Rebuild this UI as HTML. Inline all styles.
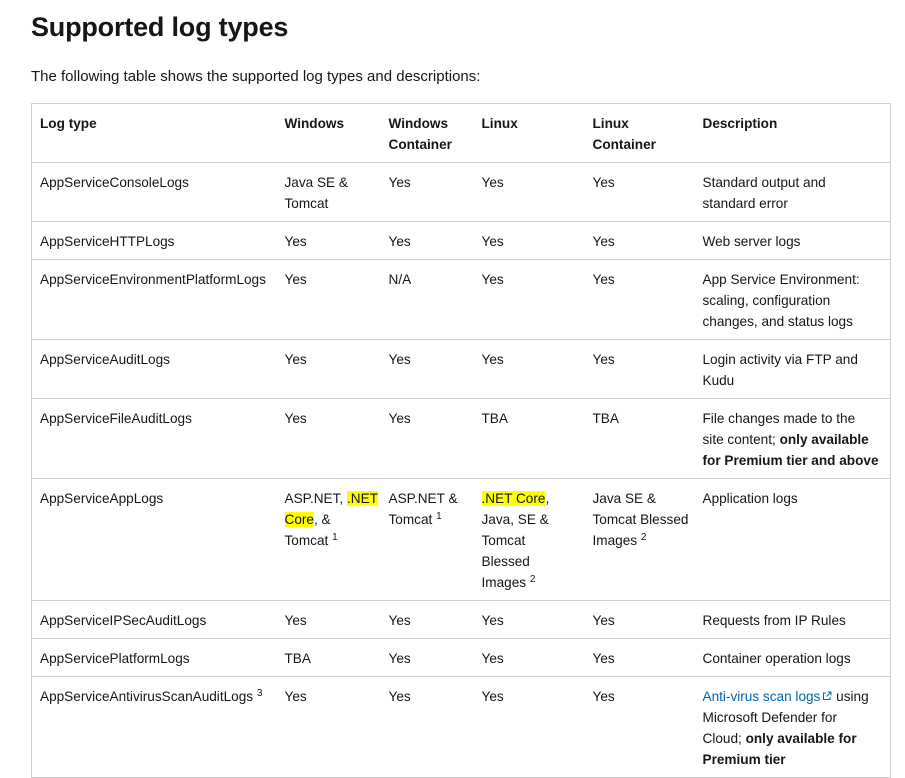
<!DOCTYPE html>
<html><head><meta charset="utf-8"><style>
body{margin:0;background:#fff;color:#161616;font-family:"Liberation Sans",Arial,sans-serif;}
h1{position:absolute;left:31px;top:12px;margin:0;font-size:27px;font-weight:600;letter-spacing:-0.2px;}
p{position:absolute;left:31px;top:66px;margin:0;font-size:15px;line-height:22px;}
table{position:absolute;left:31px;top:103px;border-collapse:collapse;table-layout:fixed;width:859px;font-size:13.6px;}
td,th{border:1px solid #d1d1d1;padding:9px 8px 7px 8px;line-height:21px;vertical-align:top;text-align:left;white-space:nowrap;overflow:hidden;}
td{border-left:none;border-right:none}
th{border-left:none;border-right:none;font-weight:bold}
tr td:first-child,tr th:first-child{border-left:1px solid #d1d1d1}
tr td:last-child,tr th:last-child{border-right:1px solid #d1d1d1}
mark{background:#ff0;color:#161616}
sup{font-size:10px;line-height:0;vertical-align:5px}
a{color:#0065b3;text-decoration:none}
</style></head><body>
<h1>Supported log types</h1>
<p>The following table shows the supported log types and descriptions:</p>
<table>
<colgroup><col style="width:245px"><col style="width:104px"><col style="width:93px"><col style="width:111px"><col style="width:110px"><col style="width:196px"></colgroup>
<tr><th>Log type</th><th>Windows</th><th>Windows<br>Container</th><th>Linux</th><th>Linux<br>Container</th><th>Description</th></tr>
<tr><td>AppServiceConsoleLogs</td><td>Java SE &amp;<br>Tomcat</td><td>Yes</td><td>Yes</td><td>Yes</td><td>Standard output and<br>standard error</td></tr>
<tr><td>AppServiceHTTPLogs</td><td>Yes</td><td>Yes</td><td>Yes</td><td>Yes</td><td>Web server logs</td></tr>
<tr><td>AppServiceEnvironmentPlatformLogs</td><td>Yes</td><td>N/A</td><td>Yes</td><td>Yes</td><td>App Service Environment:<br>scaling, configuration<br>changes, and status logs</td></tr>
<tr><td>AppServiceAuditLogs</td><td>Yes</td><td>Yes</td><td>Yes</td><td>Yes</td><td>Login activity via FTP and<br>Kudu</td></tr>
<tr><td>AppServiceFileAuditLogs</td><td>Yes</td><td>Yes</td><td>TBA</td><td>TBA</td><td>File changes made to the<br>site content; <b>only available<br>for Premium tier and above</b></td></tr>
<tr><td>AppServiceAppLogs</td><td>ASP.NET, <mark>.NET<br>Core</mark>, &amp;<br>Tomcat <sup>1</sup></td><td>ASP.NET &amp;<br>Tomcat <sup>1</sup></td><td><mark>.NET Core</mark>,<br>Java, SE &amp;<br>Tomcat<br>Blessed<br>Images <sup>2</sup></td><td>Java SE &amp;<br>Tomcat Blessed<br>Images <sup>2</sup></td><td>Application logs</td></tr>
<tr><td>AppServiceIPSecAuditLogs</td><td>Yes</td><td>Yes</td><td>Yes</td><td>Yes</td><td>Requests from IP Rules</td></tr>
<tr><td>AppServicePlatformLogs</td><td>TBA</td><td>Yes</td><td>Yes</td><td>Yes</td><td>Container operation logs</td></tr>
<tr><td>AppServiceAntivirusScanAuditLogs <sup>3</sup></td><td>Yes</td><td>Yes</td><td>Yes</td><td>Yes</td><td><a>Anti-virus scan logs<svg width="10" height="10" viewBox="0 0 10 10" style="margin-left:2px"><path d="M4 2H1.5v6.5H8V6M5.5 1H9v3.5M9 1L4.5 5.5" fill="none" stroke="#0065b3" stroke-width="1"/></svg></a> using<br>Microsoft Defender for<br>Cloud; <b>only available for<br>Premium tier</b></td></tr>
</table>
</body></html>
